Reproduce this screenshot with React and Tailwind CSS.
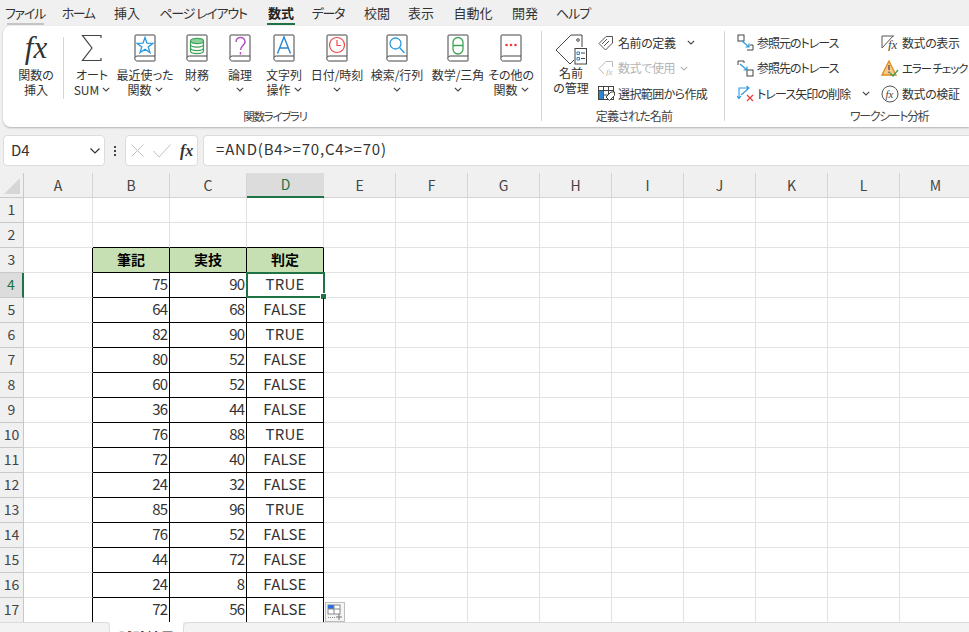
import { Fragment } from 'react'

const FONT = { fontFamily: '"Noto Sans CJK JP", "Noto Sans", sans-serif', fontFeatureSettings: '"palt"' }

const TABS = [
  ['ファイル', 'w-[48px] tracking-[-1.2px]'],
  ['ホーム', 'w-[58px] tracking-[-1.5px]'],
  ['挿入', 'w-[40px]'],
  ['ページ レイアウト', 'w-[112px] tracking-[-1.2px]'],
  ['数式', 'w-[44px]'],
  ['データ', 'w-[50px] tracking-[-1.2px]'],
  ['校閲', 'w-[48px]'],
  ['表示', 'w-[40px]'],
  ['自動化', 'w-[64px]'],
  ['開発', 'w-[40px]'],
  ['ヘルプ', 'w-[56px] tracking-[-1px]'],
]

const COLS = ['A', 'B', 'C', 'D', 'E', 'F', 'G', 'H', 'I', 'J', 'K', 'L', 'M']

const DATA = [
  [75, 90, 'TRUE'],
  [64, 68, 'FALSE'],
  [82, 90, 'TRUE'],
  [80, 52, 'FALSE'],
  [60, 52, 'FALSE'],
  [36, 44, 'FALSE'],
  [76, 88, 'TRUE'],
  [72, 40, 'FALSE'],
  [24, 32, 'FALSE'],
  [85, 96, 'TRUE'],
  [76, 52, 'FALSE'],
  [44, 72, 'FALSE'],
  [24, 8, 'FALSE'],
  [72, 56, 'FALSE'],
]

function Chevron({ className = 'text-[#444]' }) {
  return (
    <svg width="8" height="5" viewBox="0 0 8 5" className={`inline-block ${className}`}>
      <path d="M0.8 0.8 L4 4 L7.2 0.8" fill="none" stroke="currentColor" strokeWidth="1.1" />
    </svg>
  )
}

function FxGlyph({ className = 'text-[26px]' }) {
  return (
    <span
      className={`italic leading-none text-[#333] ${className}`}
      style={{ fontFamily: '"Liberation Serif", serif' }}
    >
      fx
    </span>
  )
}

function Book({ children }) {
  return (
    <svg width="22" height="28" viewBox="0 0 22 28">
      <path
        d="M1 23.5 V2 a1 1 0 0 1 1-1 H20 a1 1 0 0 1 1 1 V26.5 a.5.5 0 0 1-.5.5 H3.5 a2.5 2.5 0 0 1-2.5-3.5 a2.5 2.5 0 0 1 2.5-1.5 H21"
        fill="#fff"
        stroke="#444"
        strokeWidth="1"
      />
      {children}
    </svg>
  )
}

const BOOKS = {
  star: (
    <path d="M11 3.5 L13 9.2 L19 9.3 L14.2 12.9 L16 18.6 L11 15.2 L6 18.6 L7.8 12.9 L3 9.3 L9 9.2 Z" fill="none" stroke="#2a9ae0" strokeWidth="1.3" />
  ),
  db: (
    <g fill="none" stroke="#3fa456" strokeWidth="1.2">
      <ellipse cx="11" cy="7" rx="6.5" ry="2.6" fill="#8fd19e" />
      <path d="M4.5 7 V17 c0 3.4 13 3.4 13 0 V7" />
      <path d="M4.5 10.5 c0 3.4 13 3.4 13 0 M4.5 14 c0 3.4 13 3.4 13 0" />
    </g>
  ),
  question: (
    <path d="M7 8 c0-6 9-6 9 0 c0 3.5-4.500 3.500-4.500 8 M11.500 18 v2.400" fill="none" stroke="#b24fc4" strokeWidth="1.500" />
  ),
  letter: (
    <path d="M4.500 19.500 L11 3 L17.500 19.500 M6.800 14 H15.200" fill="none" stroke="#2a86d0" strokeWidth="1.400" />
  ),
  clock: (
    <g fill="none" stroke="#ee4b4b" strokeWidth="1.200">
      <circle cx="11" cy="11" r="7.500" />
      <path d="M11 6 V11.500 H15" />
    </g>
  ),
  search: (
    <g fill="none" stroke="#2a9ae0" strokeWidth="1.300">
      <circle cx="9.500" cy="9.500" r="5.500" />
      <path d="M13.500 13.500 L18.500 19" />
    </g>
  ),
  theta: (
    <g fill="none" stroke="#3fa456" strokeWidth="1.300">
      <rect x="6" y="3.500" width="10" height="16.500" rx="5" />
      <path d="M6 11.500 H16" />
    </g>
  ),
  dots: (
    <g fill="#ee3b3b">
      <circle cx="6.500" cy="11" r="1.300" />
      <circle cx="11" cy="11" r="1.300" />
      <circle cx="15.500" cy="11" r="1.300" />
    </g>
  ),
}

const LIBRARY = [
  ['w-[50px]', 'star', ['最近使った', '関数'], true],
  ['w-[54px]', 'db', ['財務'], false],
  ['w-[32px]', 'question', ['論理'], false],
  ['w-[56px]', 'letter', ['文字列', '操作'], true],
  ['w-[50px]', 'clock', ['日付/時刻'], false],
  ['w-[70px]', 'search', ['検索/行列'], false],
  ['w-[52px]', 'theta', ['数学/三角'], false],
  ['w-[54px]', 'dots', ['その他の', '関数'], true],
]

function BigButton({ width, icon, lines, inline }) {
  return (
    <div className={`${width} shrink-0 flex flex-col items-center`}>
      <div className="h-[30px] flex items-center justify-center">{icon}</div>
      <div className="mt-[4px] text-[12px] text-[#333] text-center whitespace-nowrap">
        {lines.map((l, i) => (
          <div key={l} className="h-[15px] leading-[15px]">
            {l}
            {inline && i === lines.length - 1 && (
              <span className="ml-[3px] relative top-[-2px]"><Chevron /></span>
            )}
          </div>
        ))}
        {!inline && (
          <div className="h-[15px] leading-[15px]"><span className="relative top-[-2px]"><Chevron /></span></div>
        )}
      </div>
    </div>
  )
}

function SmallRow({ icon, label, muted, chevron, labelClass = 'text-[12px]' }) {
  return (
    <div className="h-[25.500px] flex items-center whitespace-nowrap">
      <div className="w-[20px] h-[20px] flex items-center justify-center shrink-0">{icon}</div>
      <span className={`ml-[2px] ${labelClass} ${muted ? 'text-[#b4b4b4]' : 'text-[#333]'}`}>{label}</span>
      {chevron}
    </div>
  )
}

function Ribbon() {
  return (
    <div className="ml-[3px] h-[101px] bg-white rounded-l-[8px] shadow-[0_1px_2px_rgba(0,0,0,0.25)] flex overflow-hidden">
      {/* 関数ライブラリ */}
      <div className="flex flex-col shrink-0 pt-[7px] w-[538px]">
        <div className="flex h-[76px]">
          <div className="w-[60px] shrink-0 pl-[6px] flex flex-col items-center">
            <div className="h-[30px] flex items-center justify-center -mt-[1px]"><FxGlyph className="text-[31px]" /></div>
            <div className="mt-[5px] text-[12px] leading-[15px] text-[#333] text-center">関数の<br />挿入</div>
          </div>
          <div className="w-px h-[62px] mt-[4px] bg-[#d4d4d4]" />
          <BigButton
            width="w-[56px]"
            icon={
              <svg width="22" height="28" viewBox="0 0 22 28">
                <path d="M20 4 V1.500 H1.500 L11 14 L1.500 26.500 H20 V24" fill="none" stroke="#444" strokeWidth="1.200" />
              </svg>
            }
            lines={['オート', 'SUM']}
            inline
          />
          {LIBRARY.map(([width, key, lines, inline]) => (
            <BigButton key={key} width={width} icon={<Book>{BOOKS[key]}</Book>} lines={lines} inline={inline} />
          ))}
        </div>
        <div className="text-[11.500px] tracking-[-1.300px] leading-[15px] text-[#444] text-center pl-[6px]">関数ライブラリ</div>
      </div>
      <div className="w-px h-[90px] mt-[5px] bg-[#d4d4d4] shrink-0" />

      {/* 定義された名前 */}
      <div className="flex flex-col shrink-0 pt-[4px] w-[182px]">
        <div className="flex h-[78px]">
          <div className="w-[54px] shrink-0 pl-[4px] flex flex-col items-center">
            <div className="h-[31px] flex items-center justify-center mt-[4px]">
              <svg width="34" height="31" viewBox="0 0 34 31">
                <path d="M2 16 L17 1 H28 V13 M2 16 L16 30 L20 26" fill="none" stroke="#444" strokeWidth="1" />
                <circle cx="24" cy="6" r="1.300" fill="none" stroke="#444" />
                <rect x="21" y="14.500" width="11.500" height="15.500" fill="#fff" stroke="#444" />
                <path d="M23 18 h2.500 v2.500 h-2.500z M23 23.500 h2.500 v2.500 h-2.500z" fill="none" stroke="#2a86d0" />
                <path d="M27 19 h4 M27 24.500 h4" stroke="#444" />
              </svg>
            </div>
            <div className="text-[12px] leading-[15px] text-[#333] text-center">名前<br />の管理</div>
          </div>
          <div className="flex flex-col">
            <SmallRow
              label="名前の定義"
              labelClass="text-[12px] w-[69px] tracking-[-0.400px]"
              chevron={<Chevron />}
              icon={
                <svg width="16" height="16" viewBox="0 0 16 16">
                  <path d="M1 8.500 L8 1.500 H14.500 V8 L7.500 15 Z M4 9 L9 4 M6 11 L11 6" fill="none" stroke="#555" strokeWidth="1" />
                </svg>
              }
            />
            <SmallRow
              muted
              label="数式で使用"
              labelClass="text-[12px] w-[62px] tracking-[-0.400px]"
              chevron={<Chevron className="text-[#b4b4b4]" />}
              icon={
                <svg width="16" height="16" viewBox="0 0 16 16">
                  <path d="M1 8.500 L8 1.500 H14.500 V7 M1 8.500 L6 14" fill="none" stroke="#bbb" strokeWidth="1" />
                  <text x="8" y="15" fontSize="9" fontStyle="italic" fill="#bbb" fontFamily="Liberation Serif">fx</text>
                </svg>
              }
            />
            <SmallRow
              label="選択範囲から作成"
              labelClass="text-[12px] tracking-[-0.600px]"
              icon={
                <svg width="17" height="15" viewBox="0 0 17 15">
                  <rect x="0.500" y="0.500" width="15" height="13" fill="none" stroke="#444" />
                  <path d="M0.500 4.500 H15.500 M0.500 9 H10 M5.500 .5 V13.500 M10.500 .5 V9" stroke="#444" />
                  <rect x="1" y="5" width="4.500" height="8" fill="#2a86d0" />
                  <path d="M8 11 L13 6 H16.500 V9.500 L11.500 14.500 Z" fill="#fff" stroke="#444" />
                </svg>
              }
            />
          </div>
        </div>
        <div className="text-[12px] tracking-[-0.800px] leading-[15px] text-[#444] text-center pl-[2px]">定義された名前</div>
      </div>
      <div className="w-px h-[90px] mt-[5px] bg-[#d4d4d4] shrink-0" />

      {/* ワークシート分析 */}
      <div className="flex flex-col shrink-0 pt-[4px] pl-[10px]">
        <div className="flex h-[78px]">
          <div className="w-[145px] flex flex-col shrink-0">
            <SmallRow
              label="参照元のトレース"
              labelClass="text-[12px] tracking-[-1px]"
              icon={
                <svg width="17" height="17" viewBox="0 0 17 17">
                  <rect x="1" y="1" width="6" height="6" fill="none" stroke="#444" />
                  <path d="M10 16 H16 V11 H13" fill="none" stroke="#444" />
                  <path d="M5 7 L12 13 M8.500 13 H12 V9.500" fill="none" stroke="#2a9ae0" strokeWidth="1.200" />
                </svg>
              }
            />
            <SmallRow
              label="参照先のトレース"
              labelClass="text-[12px] tracking-[-1px]"
              icon={
                <svg width="17" height="17" viewBox="0 0 17 17">
                  <path d="M1 5 V1 H7 V3" fill="none" stroke="#444" />
                  <rect x="10" y="10" width="6" height="6" fill="none" stroke="#444" />
                  <path d="M3 4 L10 10 M6.500 10 H10 V6.500" fill="none" stroke="#2a9ae0" strokeWidth="1.200" />
                </svg>
              }
            />
            <SmallRow
              label="トレース矢印の削除"
              labelClass="text-[12px] w-[105px] tracking-[-0.900px]"
              chevron={<Chevron />}
              icon={
                <svg width="17" height="17" viewBox="0 0 17 17">
                  <path d="M2 13 V3 H12 M9.500 1 L12 3 L9.500 5 M0 11 L2 13.500 L4 11 M4 10 L11 4" fill="none" stroke="#2a9ae0" strokeWidth="1.100" />
                  <path d="M10 10 L16 16 M16 10 L10 16" stroke="#ee3b3b" strokeWidth="1.200" />
                </svg>
              }
            />
          </div>
          <div className="flex flex-col shrink-0">
            <SmallRow
              label="数式の表示"
              labelClass="text-[12px] tracking-[-0.400px]"
              icon={
                <svg width="18" height="17" viewBox="0 0 18 17">
                  <path d="M1 14 V2 H13 M1 14 L12 2" fill="none" stroke="#555" />
                  <text x="7" y="15" fontSize="13" fontStyle="italic" fill="#444" fontFamily="Liberation Serif">fx</text>
                </svg>
              }
            />
            <SmallRow
              label="エラー チェック"
              labelClass="text-[11.500px] tracking-[-1.100px]"
              icon={
                <svg width="18" height="17" viewBox="0 0 18 17">
                  <path d="M8 1 L15 15 H1 Z" fill="#f7c98b" stroke="#e08a1e" strokeWidth="1.300" />
                  <path d="M8 5 V10 M8 11.500 V13" stroke="#444" strokeWidth="1.200" />
                  <path d="M9 13 L12 16 L17 10" fill="none" stroke="#3fa456" strokeWidth="1.300" />
                </svg>
              }
            />
            <SmallRow
              label="数式の検証"
              labelClass="text-[12px] tracking-[-0.400px]"
              icon={
                <svg width="18" height="18" viewBox="0 0 18 18">
                  <circle cx="9" cy="9" r="8" fill="none" stroke="#555" />
                  <text x="4.500" y="13" fontSize="11" fontStyle="italic" fill="#444" fontFamily="Liberation Serif">fx</text>
                </svg>
              }
            />
          </div>
        </div>
        <div className="text-[12px] tracking-[-1.400px] leading-[15px] text-[#444] text-center pl-[76px]">ワークシート分析</div>
      </div>
    </div>
  )
}

function FormulaBar() {
  return (
    <div className="h-[31px] mt-[8px] flex pl-[3px] items-stretch shrink-0">
      <div className="w-[102px] bg-white border border-[#dcdcdc] rounded-[4px] flex items-center justify-between pl-[7px] pr-[4px] text-[15px] text-[#333]">
        D4
        <svg width="10" height="6" viewBox="0 0 10 6"><path d="M.5 .5 L5 5 L9.500 .5" fill="none" stroke="#333" strokeWidth="1.200" /></svg>
      </div>
      <div className="w-[20px] flex flex-col items-center justify-center gap-[2px]">
        <span className="w-[2px] h-[2px] bg-[#444]" />
        <span className="w-[2px] h-[2px] bg-[#444]" />
        <span className="w-[2px] h-[2px] bg-[#444]" />
      </div>
      <div className="w-[73px] bg-white border border-[#dcdcdc] rounded-[4px] flex items-center pl-[5px] gap-[9px]">
        <svg width="13" height="13" viewBox="0 0 13 13" className="shrink-0"><path d="M.5 .5 L12.500 12.500 M12.500 .5 L.5 12.500" stroke="#c0c0c0" /></svg>
        <svg width="18" height="14" viewBox="0 0 18 14" className="shrink-0"><path d="M.5 7 L6 13 L17.500 .5" fill="none" stroke="#c0c0c0" /></svg>
        <span className="font-bold relative -top-[2px]"><FxGlyph className="text-[16px]" /></span>
      </div>
      <div className="ml-[5px] flex-1 bg-white border border-[#dcdcdc] border-r-0 rounded-l-[4px] flex items-center pl-[12px] pb-[2px] text-[15px] tracking-[0.8px] text-[#333]">
        =AND(B4&gt;=70,C4&gt;=70)
      </div>
    </div>
  )
}

function Sheet() {
  const rows = Array.from({ length: 17 }, (_, i) => i + 1)
  return (
    <div className="mt-[7px] grid grid-cols-[24px_69px_77px_77px_77px_72px_72px_72px_72px_72px_72px_72px_72px_72px] grid-rows-[25px_repeat(17,25px)] bg-white text-[14px] text-[#333] shrink-0">
      <div className="bg-[#f0f0f0] border-r border-b border-[#c8c8c8] flex items-end justify-end p-[3px]">
        <svg width="16" height="16" viewBox="0 0 16 16"><path d="M16 0 V16 H0 Z" fill="#d6d6d6" /></svg>
      </div>
      {COLS.map((c) => (
        <div
          key={c}
          className={
            c === 'D'
              ? 'bg-[#dcdcdc] border-b-2 border-[#1f7244] text-[#1f7244] flex items-center justify-center'
              : 'bg-[#f0f0f0] border-r border-b border-[#d4d4d4] text-[#444] flex items-center justify-center'
          }
        >
          {c}
        </div>
      ))}
      {rows.map((r) => {
        const d = r >= 4 ? DATA[r - 4] : null
        return (
          <Fragment key={r}>
            <div
              className={
                r === 4
                  ? 'bg-[#dcdcdc] border-r-2 border-b border-r-[#1f7244] border-b-[#c8c8c8] text-[#1f7244] flex items-center justify-center pb-[1px]'
                  : 'bg-[#f0f0f0] border-r border-b border-[#c8c8c8] text-[#444] flex items-center justify-center pb-[1px]'
              }
            >
              {r}
            </div>
            {COLS.map((c) => {
              if (r === 3 && (c === 'B' || c === 'C' || c === 'D')) {
                const label = { B: '筆記', C: '実技', D: '判定' }[c]
                return (
                  <div key={c} className="bg-[#c6e0b4] border-r border-b border-black font-bold text-black flex items-center justify-center pb-[1px]">
                    {label}
                  </div>
                )
              }
              if (d && (c === 'B' || c === 'C')) {
                return (
                  <div key={c} className="border-r border-b border-black flex items-center justify-end pr-[2px] pb-[1px] text-[15px] tracking-[-1px]">
                    {d[c === 'B' ? 0 : 1]}
                  </div>
                )
              }
              if (d && c === 'D') {
                return (
                  <div key={c} className="relative border-r border-b border-black flex items-center justify-center pb-[1px] text-[15px] tracking-[0.200px]">
                    {d[2]}
                    {r === 4 && (
                      <div className="absolute -left-px -top-px -right-[2px] -bottom-px border-2 border-[#1f7244]">
                        <span className="absolute -right-[4px] -bottom-[4px] w-[5px] h-[5px] bg-[#1f7244] border border-white box-content" />
                      </div>
                    )}
                    {r === 17 && (
                      <div className="absolute left-[78px] top-[4px] w-[20px] h-[20px] bg-[#f4f4f4] border border-[#bdbdbd] flex items-center justify-center">
                        <svg width="16" height="16" viewBox="0 0 16 16">
                          <rect x="1" y="1" width="12" height="9" fill="#fff" stroke="#888" />
                          <rect x="1" y="1" width="6" height="4" fill="#2b6fe0" />
                          <path d="M1 5 H13 M7 1 V10" stroke="#888" />
                          <path d="M1 13.500 H8" stroke="#888" strokeDasharray="1 1" />
                          <path d="M12 10 V16 M9 13 H15" stroke="#777" />
                        </svg>
                      </div>
                    )}
                  </div>
                )
              }
              const blackRight = c === 'A' && r >= 3
              const blackBottom = r === 2 && (c === 'B' || c === 'C' || c === 'D')
              return (
                <div
                  key={c}
                  className={`border-r border-b ${blackRight ? 'border-r-black' : 'border-r-[#e2e2e2]'} ${blackBottom ? 'border-b-black' : 'border-b-[#e2e2e2]'}`}
                />
              )
            })}
          </Fragment>
        )
      })}
    </div>
  )
}

function SheetTabs() {
  return (
    <div className="relative z-10 -mt-[1px] h-[10px] flex bg-[#f0f0f0] overflow-hidden shrink-0">
      <div className="w-[110px] h-[20px] bg-[#f3f3f3] border border-[#dcdcdc] rounded-tr-[5px] border-l-0" />
      <div className="w-[73px] h-[24px] bg-white text-[14px] font-bold text-[#333] text-center pt-[6px] leading-[18px]">試験結果</div>
      <div className="flex-1 h-[20px] bg-[#f3f3f3] border border-[#dcdcdc] rounded-tl-[5px] border-r-0" />
    </div>
  )
}

export default function App() {
  return (
    <div className="w-[969px] h-[632px] overflow-hidden bg-[#f0f0f0] flex flex-col" style={FONT}>
      <div className="h-[26px] flex items-center pl-[1px] shrink-0">
        {TABS.map(([t, w]) => (
          <div
            key={t}
            className={`${w} relative text-center whitespace-nowrap text-[13px] ${t === '数式' ? 'font-bold text-[#222]' : 'text-[#333]'}`}
          >
            {t}
            {t === 'ファイル' && <span className="absolute left-[6px] right-[5px] -bottom-[2px] h-[2px] bg-[#c4c4c4]" />}
            {t === '数式' && <span className="absolute left-[8px] right-[8px] -bottom-[2px] h-[2px] bg-[#1f7244]" />}
          </div>
        ))}
      </div>
      <Ribbon />
      <FormulaBar />
      <Sheet />
      <SheetTabs />
    </div>
  )
}
